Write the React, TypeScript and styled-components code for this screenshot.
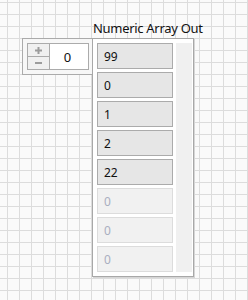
import React from "react";
import styled, { createGlobalStyle } from "styled-components";

const GRID = 12;

const GlobalStyle = createGlobalStyle`
  html, body {
    margin: 0;
    padding: 0;
  }
  body {
    width: 248px;
    height: 300px;
    overflow: hidden;
    font-family: "Noto Sans", "Open Sans", sans-serif;
    background-color: #fafafa;
    background-image:
      linear-gradient(to right, #dcdcdc 1px, transparent 1px),
      linear-gradient(to bottom, #dcdcdc 1px, transparent 1px);
    background-size: ${GRID}px ${GRID}px;
    background-position: 7px 2px;
  }
`;

const values = [99, 0, 1, 2, 22];
const placeholders = 3;

const PlusIcon = () => (
  <svg width="7" height="7" viewBox="0 0 7 7">
    <path d="M0 2.5h7v2H0zM2.5 0h2v7h-2z" fill="#9c9c9c" />
  </svg>
);

const MinusIcon = () => (
  <svg width="7" height="2" viewBox="0 0 7 2">
    <path d="M0 0h7v2H0z" fill="#9c9c9c" />
  </svg>
);

export default function App() {
  return (
    <>
      <GlobalStyle />
      <Panel>
        <Numeric>
          <NumericInner>
            <Steppers>
              <Step>
                <PlusIcon />
              </Step>
              <Step minus>
                <MinusIcon />
              </Step>
            </Steppers>
            <NumericField>0</NumericField>
          </NumericInner>
        </Numeric>
        <ArrayColumn>
          <Label>Numeric Array Out</Label>
          <ArrayBox>
            <Elements>
              {values.map((v, i) => (
                <Element key={i}>{v}</Element>
              ))}
              {Array.from({ length: placeholders }).map((_, i) => (
                <Element key={"p" + i} empty>
                  0
                </Element>
              ))}
            </Elements>
            <Scroll />
          </ArrayBox>
        </ArrayColumn>
      </Panel>
    </>
  );
}

const Panel = styled.div`
  display: flex;
  align-items: flex-start;
  padding: 18px 0 0 22px;
`;

const Numeric = styled.div`
  margin-top: 20px;
  margin-right: -1px;
  width: 71px;
  height: 37px;
  box-sizing: border-box;
  border: 1px solid #ababab;
  background: #f7f7f7;
  padding: 4px 3px 4px 4px;
  display: flex;
`;

const NumericInner = styled.div`
  flex: 1;
  display: flex;
  border: 1px solid #ababab;
  background: #fff;
`;

const Steppers = styled.div`
  width: 21px;
  display: flex;
  flex-direction: column;
  border-right: 1px solid #ababab;
  background: #f0f0f0;
`;

const Step = styled.div<{ minus?: boolean }>`
  flex: 1;
  display: flex;
  align-items: center;
  justify-content: center;
  border-top: ${(p) => (p.minus ? "1px solid #ababab" : "none")};
`;

const NumericField = styled.div`
  flex: 1;
  display: flex;
  align-items: center;
  justify-content: center;
  padding-right: 3px;
  font-size: 13px;
  color: #111;
`;

const ArrayColumn = styled.div`
  display: flex;
  flex-direction: column;
`;

const Label = styled.div`
  width: 0;
  height: 20px;
  padding-left: 1px;
  font-size: 13px;
  letter-spacing: -0.3px;
  line-height: 20px;
  color: #111;
  white-space: nowrap;
`;

const ArrayBox = styled.div`
  display: flex;
  gap: 3px;
  border: 1px solid #a8a8a8;
  background: #fff;
  padding: 4px 1px 4px 4px;
  box-shadow: 1px 1px 0 #d6d6d6;
`;

const Elements = styled.div`
  display: flex;
  flex-direction: column;
  gap: 3px;
`;

const Element = styled.div<{ empty?: boolean }>`
  width: 76px;
  height: 26px;
  box-sizing: border-box;
  padding-left: 6px;
  display: flex;
  align-items: center;
  font-size: 12px;
  border: 1px solid ${(p) => (p.empty ? "#dcdcdc" : "#ababab")};
  background: ${(p) => (p.empty ? "#f1f1f1" : "#e6e6e6")};
  color: ${(p) => (p.empty ? "#a9aec0" : "#111")};
`;

const Scroll = styled.div`
  width: 16px;
  background: #f0f0f0;
`;
